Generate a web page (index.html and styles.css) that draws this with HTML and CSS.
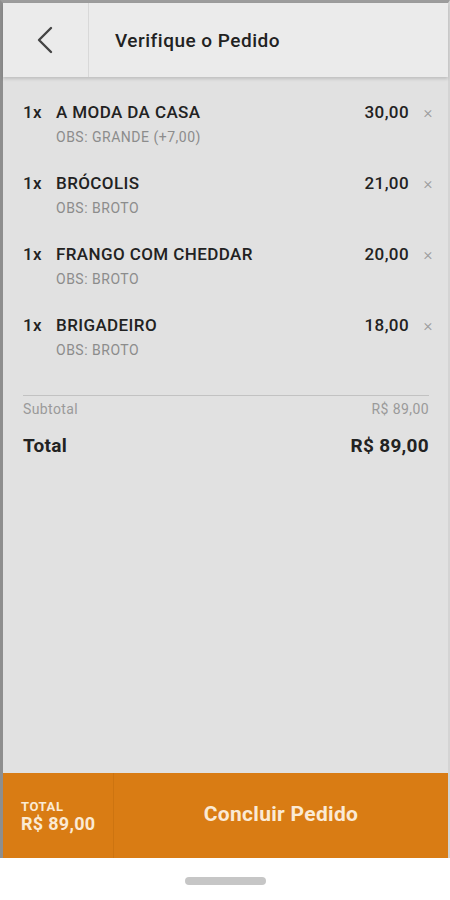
FILE: index.html
```html
<!DOCTYPE html>
<html lang="pt-BR">
  <head>
    <meta charset="UTF-8">
    <meta name="viewport" content="width=device-width, initial-scale=1.0">
    <title>Verifique o Pedido</title>
    <link rel="stylesheet" href="styles.css">
  </head>
  <body>
    <div class="screen">
      <header class="top-bar">
        <button class="back-button" aria-label="Voltar">
          <svg width="18" height="28" viewBox="0 0 18 28">
            <path d="M15 2 L3 14 L15 26" fill="none" stroke="#444" stroke-width="2.4" stroke-linecap="round" stroke-linejoin="round"/>
          </svg>
        </button>
        <h1 class="title">Verifique o Pedido</h1>
      </header>

      <main class="order">
        <ul class="items">
          <li class="item">
            <span class="qty">1x</span>
            <span class="name">A MODA DA CASA</span>
            <span class="price">30,00</span>
            <span class="remove">&times;</span>
            <span class="obs">OBS: GRANDE (+7,00)</span>
          </li>
          <li class="item">
            <span class="qty">1x</span>
            <span class="name">BRÓCOLIS</span>
            <span class="price">21,00</span>
            <span class="remove">&times;</span>
            <span class="obs">OBS: BROTO</span>
          </li>
          <li class="item">
            <span class="qty">1x</span>
            <span class="name">FRANGO COM CHEDDAR</span>
            <span class="price">20,00</span>
            <span class="remove">&times;</span>
            <span class="obs">OBS: BROTO</span>
          </li>
          <li class="item">
            <span class="qty">1x</span>
            <span class="name">BRIGADEIRO</span>
            <span class="price">18,00</span>
            <span class="remove">&times;</span>
            <span class="obs">OBS: BROTO</span>
          </li>
        </ul>

        <div class="summary">
          <div class="summary-row subtotal">
            <span>Subtotal</span>
            <span>R$ 89,00</span>
          </div>
          <div class="summary-row total">
            <span>Total</span>
            <span>R$ 89,00</span>
          </div>
        </div>
      </main>

      <footer class="checkout">
        <div class="checkout-total">
          <span class="checkout-label">TOTAL</span>
          <span class="checkout-value">R$ 89,00</span>
        </div>
        <button class="checkout-button">Concluir Pedido</button>
      </footer>
    </div>

    <div class="home-area">
      <div class="home-indicator"></div>
    </div>
  </body>
</html>
```

FILE: styles.css
```css
body {
  margin: 0;
  padding: 0;
  background-color: #fff;
  font-family: Roboto, "Noto Sans", Arial, sans-serif;
  color: #222;
}

.screen {
  height: 855px;
  display: flex;
  flex-direction: column;
  border-top: 3px solid #9c9c9c;
  border-left: 3px solid #8e8e8e;
  border-right: 2px solid #d4d4d4;
  background-color: #e1e1e1;
}

.top-bar {
  height: 74px;
  display: flex;
  align-items: center;
  background-color: #ebebeb;
  box-shadow: 0px 2px 3px rgba(0, 0, 0, 0.15);
  position: relative;
  z-index: 1;
}

.back-button {
  width: 86px;
  height: 100%;
  display: flex;
  align-items: center;
  justify-content: center;
  padding: 0;
  border: none;
  border-right: 1px solid #d8d8d8;
  background: none;
  cursor: pointer;
}

.back-button svg {
  margin-right: 2px;
}

.title {
  margin: 0 0 0 26px;
  font-size: 19px;
  font-weight: 500;
  letter-spacing: 0.5px;
  color: #222;
}

.order {
  flex: 1;
  padding-top: 25px;
}

.items {
  list-style: none;
  margin: 0;
  padding: 0;
}

.item {
  display: grid;
  grid-template-columns: 33px 1fr auto 31px;
  align-items: center;
  padding: 0 8px 28px 20px;
}

.qty,
.name,
.price {
  font-size: 17px;
  font-weight: 500;
  line-height: 20px;
  letter-spacing: 0.4px;
  color: #222;
}

.remove {
  justify-self: end;
  width: 24px;
  text-align: center;
  font-size: 17px;
  font-weight: 300;
  line-height: 20px;
  color: #9a9a9a;
}

.obs {
  grid-column: 2 / 5;
  margin-top: 7px;
  font-size: 14px;
  line-height: 16px;
  letter-spacing: 0.5px;
  color: #8c8c8c;
}

.summary {
  margin: 9px 19px 0 20px;
  border-top: 1px solid #c2c2c2;
}

.summary-row {
  display: flex;
  justify-content: space-between;
}

.subtotal {
  margin-top: 4px;
  font-size: 14px;
  line-height: 18px;
  letter-spacing: 0.4px;
  color: #9a9a9a;
}

.total {
  margin-top: 17px;
  font-size: 19px;
  font-weight: 700;
  line-height: 22px;
  letter-spacing: 0.3px;
  color: #222;
}

.checkout {
  height: 85px;
  display: flex;
  background-color: #d97c14;
}

.checkout-total {
  width: 111px;
  display: flex;
  flex-direction: column;
  justify-content: center;
  padding-left: 18px;
  box-sizing: border-box;
  border-right: 1px solid #cd7410;
  color: #fbead4;
}

.checkout-label {
  font-size: 13px;
  font-weight: 700;
  line-height: 14px;
  letter-spacing: 0.6px;
  margin-top: 2px;
}

.checkout-value {
  font-size: 18px;
  font-weight: 700;
  line-height: 20px;
  letter-spacing: 0.3px;
}

.checkout-button {
  flex: 1;
  border: none;
  background: none;
  padding: 0 0 4px 0;
  font-family: inherit;
  font-size: 21px;
  font-weight: 700;
  letter-spacing: 0.3px;
  color: #fbead4;
  cursor: pointer;
}

.home-area {
  height: 42px;
  display: flex;
  justify-content: center;
  align-items: center;
}

.home-indicator {
  width: 81px;
  height: 8px;
  border-radius: 4px;
  background-color: #c6c6c6;
  margin-top: 3px;
}
```
